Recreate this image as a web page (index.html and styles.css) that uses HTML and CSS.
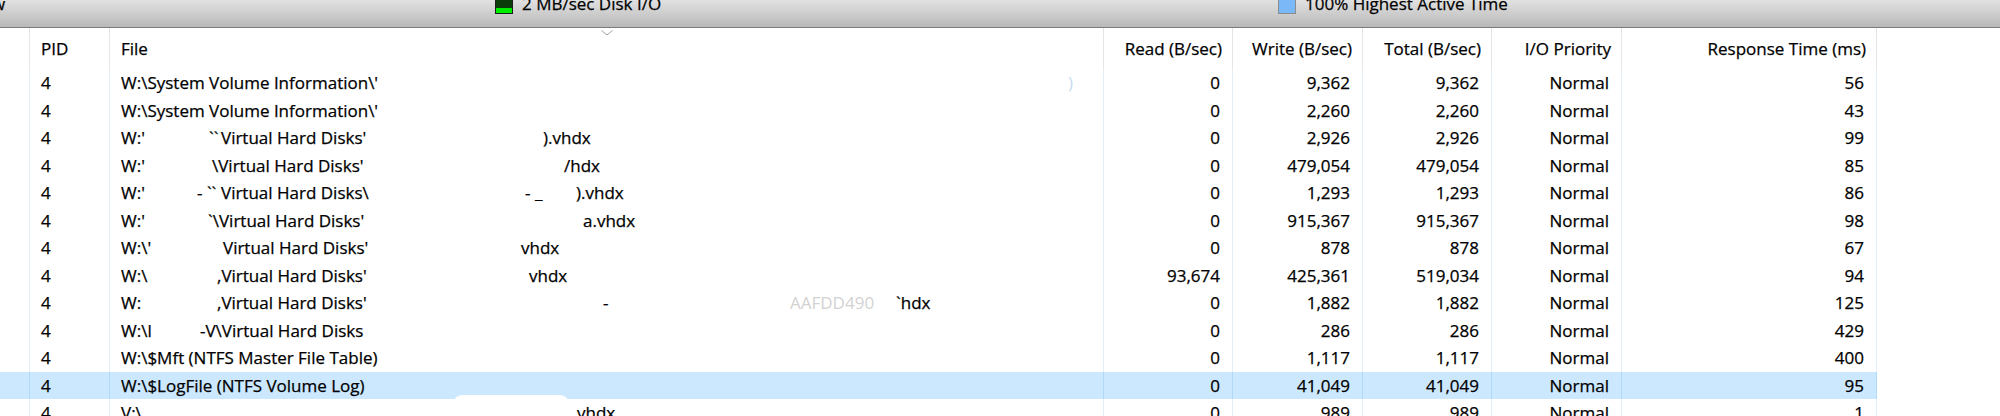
FILE: index.html
```html
<!DOCTYPE html>
<html>
<head>
<meta charset="utf-8">
<link rel="stylesheet" href="styles.css">
</head>
<body>
<div class="topbar">
  <div class="corner"><span class="corner-glyph">w</span></div>
  <div class="legend"><span class="swatch swatch-green"></span><span class="legend-text">2 MB/sec Disk I/O</span></div>
  <div class="legend"><span class="swatch swatch-blue"></span><span class="legend-text">100% Highest Active Time</span></div>
</div>

<div class="head">
  <div class="hc"></div>
  <div class="hc">PID</div>
  <div class="hc file-head">File<svg class="sort" width="12" height="6" viewBox="0 0 12 6"><path d="M0.5 0.5 L6 5 L11.5 0.5" fill="none" stroke="#a0a0a0" stroke-width="1"/></svg></div>
  <div class="hc num">Read (B/sec)</div>
  <div class="hc num">Write (B/sec)</div>
  <div class="hc num">Total (B/sec)</div>
  <div class="hc num">I/O Priority</div>
  <div class="hc num">Response Time (ms)</div>
  <div class="hc end"></div>
</div>

<div class="rows">
  <div class="row">
    <div class="c"></div><div class="c">4</div>
    <div class="c"><span class="seg" style="--w:947px">W:\System Volume Information\'</span><span class="faint-blue">)</span></div>
    <div class="c num">0</div><div class="c num">9,362</div><div class="c num">9,362</div><div class="c num">Normal</div><div class="c num">56</div><div class="c end"></div>
  </div>
  <div class="row">
    <div class="c"></div><div class="c">4</div>
    <div class="c"><span class="seg">W:\System Volume Information\'</span></div>
    <div class="c num">0</div><div class="c num">2,260</div><div class="c num">2,260</div><div class="c num">Normal</div><div class="c num">43</div><div class="c end"></div>
  </div>
  <div class="row">
    <div class="c"></div><div class="c">4</div>
    <div class="c"><span class="seg" style="--w:88px">W:'</span><span class="seg" style="--w:12px">``</span><span class="seg" style="--w:322px">Virtual Hard Disks'</span><span class="seg">).vhdx</span></div>
    <div class="c num">0</div><div class="c num">2,926</div><div class="c num">2,926</div><div class="c num">Normal</div><div class="c num">99</div><div class="c end"></div>
  </div>
  <div class="row">
    <div class="c"></div><div class="c">4</div>
    <div class="c"><span class="seg" style="--w:91px">W:'</span><span class="seg" style="--w:352px">\Virtual Hard Disks'</span><span class="seg">/hdx</span></div>
    <div class="c num">0</div><div class="c num">479,054</div><div class="c num">479,054</div><div class="c num">Normal</div><div class="c num">85</div><div class="c end"></div>
  </div>
  <div class="row">
    <div class="c"></div><div class="c">4</div>
    <div class="c"><span class="seg" style="--w:76px">W:'</span><span class="seg" style="--w:24px">- ``</span><span class="seg" style="--w:304px">Virtual Hard Disks\</span><span class="seg" style="--w:51px">- _</span><span class="seg">).vhdx</span></div>
    <div class="c num">0</div><div class="c num">1,293</div><div class="c num">1,293</div><div class="c num">Normal</div><div class="c num">86</div><div class="c end"></div>
  </div>
  <div class="row">
    <div class="c"></div><div class="c">4</div>
    <div class="c"><span class="seg" style="--w:87px">W:'</span><span class="seg" style="--w:375px">`\Virtual Hard Disks'</span><span class="seg">a.vhdx</span></div>
    <div class="c num">0</div><div class="c num">915,367</div><div class="c num">915,367</div><div class="c num">Normal</div><div class="c num">98</div><div class="c end"></div>
  </div>
  <div class="row">
    <div class="c"></div><div class="c">4</div>
    <div class="c"><span class="seg" style="--w:102px">W:\'</span><span class="seg" style="--w:298px">Virtual Hard Disks'</span><span class="seg">vhdx</span></div>
    <div class="c num">0</div><div class="c num">878</div><div class="c num">878</div><div class="c num">Normal</div><div class="c num">67</div><div class="c end"></div>
  </div>
  <div class="row">
    <div class="c"></div><div class="c">4</div>
    <div class="c"><span class="seg" style="--w:96px">W:\</span><span class="seg" style="--w:312px">,Virtual Hard Disks'</span><span class="seg">vhdx</span></div>
    <div class="c num">93,674</div><div class="c num">425,361</div><div class="c num">519,034</div><div class="c num">Normal</div><div class="c num">94</div><div class="c end"></div>
  </div>
  <div class="row">
    <div class="c"></div><div class="c">4</div>
    <div class="c"><span class="seg" style="--w:96px">W:</span><span class="seg" style="--w:386px">,Virtual Hard Disks'</span><span class="seg" style="--w:187px">-</span><span class="seg faint" style="--w:106px">AAFDD490</span><span class="seg">`hdx</span></div>
    <div class="c num">0</div><div class="c num">1,882</div><div class="c num">1,882</div><div class="c num">Normal</div><div class="c num">125</div><div class="c end"></div>
  </div>
  <div class="row">
    <div class="c"></div><div class="c">4</div>
    <div class="c"><span class="seg" style="--w:79px">W:\l</span><span class="seg">-V\Virtual Hard Disks</span></div>
    <div class="c num">0</div><div class="c num">286</div><div class="c num">286</div><div class="c num">Normal</div><div class="c num">429</div><div class="c end"></div>
  </div>
  <div class="row">
    <div class="c"></div><div class="c">4</div>
    <div class="c"><span class="seg">W:\$Mft (NTFS Master File Table)</span></div>
    <div class="c num">0</div><div class="c num">1,117</div><div class="c num">1,117</div><div class="c num">Normal</div><div class="c num">400</div><div class="c end"></div>
  </div>
  <div class="row sel">
    <div class="c"></div><div class="c">4</div>
    <div class="c"><span class="seg">W:\$LogFile (NTFS Volume Log)</span></div>
    <div class="c num">0</div><div class="c num">41,049</div><div class="c num">41,049</div><div class="c num">Normal</div><div class="c num">95</div><div class="c end"></div>
  </div>
  <div class="row">
    <div class="c"></div><div class="c">4</div>
    <div class="c"><span class="seg" style="--w:456px">V:\</span><span class="seg">vhdx</span></div>
    <div class="c num">0</div><div class="c num">989</div><div class="c num">989</div><div class="c num">Normal</div><div class="c num">1</div><div class="c end"></div>
  </div>
</div>

<div class="mask"></div>
</body>
</html>
```

FILE: styles.css
```css
html, body {
  margin: 0;
  padding: 0;
}

body {
  width: 2000px;
  height: 416px;
  overflow: hidden;
  position: relative;
  background: #ffffff;
  color: #000000;
  font-family: "Open Sans", "Noto Sans", sans-serif;
  font-size: 17px;
  -webkit-text-stroke: 0.25px currentColor;
  --cols: 30px 80px 994px 129px 130px 129px 130px 255px 1fr;
}

/* top legend bar */
.topbar {
  height: 27px;
  border-bottom: 1px solid #7b7b7b;
  background: linear-gradient(#e1e1e1, #b9b9b9);
  display: grid;
  grid-template-columns: 495px 783px 1fr;
  align-items: start;
  overflow: hidden;
}

.corner {
  height: 14px;
  display: flex;
  align-items: flex-end;
}

.corner-glyph {
  line-height: 17px;
  margin-bottom: 2px;
  margin-left: -8px;
}

.legend {
  display: flex;
  align-items: flex-end;
  gap: 9px;
  height: 14px;
}

.swatch {
  flex: none;
  width: 18px;
  height: 22px;
  box-sizing: border-box;
  border: 1px solid #1c1c1c;
}

.swatch-green {
  background:
    linear-gradient(#00f000, #00f000) bottom / 100% 5px no-repeat,
    radial-gradient(circle, #0a3a0a 0.7px, #00d800 1.1px) 0 0 / 2px 2px;
}

.swatch-blue {
  background: #7ab8f8;
  border-color: #8c8c8c;
}

.legend-text {
  line-height: 17px;
  margin-bottom: 2px;
  white-space: nowrap;
}

/* column header */
.head {
  display: grid;
  grid-template-columns: var(--cols);
  height: 41px;
}

.hc {
  box-sizing: border-box;
  border-right: 1px solid #e5e5e5;
  display: flex;
  align-items: center;
  padding: 0 10px 0 11px;
  white-space: nowrap;
}

.hc.num {
  justify-content: flex-end;
}

.file-head {
  position: relative;
}

.sort {
  position: absolute;
  left: 50%;
  top: 2px;
  transform: translateX(-50%);
}

.hc.end,
.c.end {
  border-right: none;
}

/* rows */
.row {
  display: grid;
  grid-template-columns: var(--cols);
  height: 27.5px;
}

.c {
  box-sizing: border-box;
  border-right: 1px solid #e4eef9;
  padding: 0 12px 0 11px;
  display: flex;
  align-items: center;
  white-space: nowrap;
  overflow: hidden;
}

.c.num {
  justify-content: flex-end;
}

.seg {
  flex: none;
  display: inline-block;
  width: var(--w, auto);
  white-space: pre;
}

.faint {
  color: #d2d2d2;
  -webkit-text-stroke: 0;
}

.faint-blue {
  color: #c9daf0;
  -webkit-text-stroke: 0;
}

.row.sel .c {
  background: #cce8ff;
  border-right-color: #b3d9f8;
}

.row.sel .c.end {
  background: transparent;
}

/* redaction blot over the list */
.mask {
  position: absolute;
  left: 453px;
  top: 395px;
  width: 116px;
  height: 30px;
  background: #ffffff;
  border-radius: 9px;
}
```
